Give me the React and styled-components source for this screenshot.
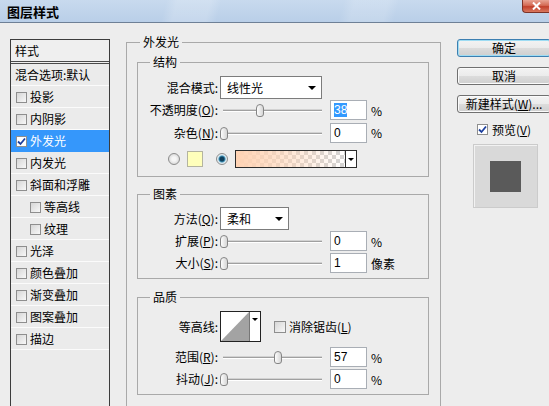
import styled, { createGlobalStyle } from "styled-components"

const GlobalStyle = createGlobalStyle`
  html, body {
    margin: 0;
    padding: 0;
  }
  body {
    width: 549px;
    height: 406px;
    overflow: hidden;
    background: #ededed;
    font-family: "Noto Sans CJK SC", "Liberation Sans", sans-serif;
    font-size: 12px;
    color: #000;
  }
`

const styleRows = [
  { text: "混合选项:默认", plain: true },
  { text: "投影" },
  { text: "内阴影" },
  { text: "外发光", checked: true, selected: true },
  { text: "内发光" },
  { text: "斜面和浮雕" },
  { text: "等高线", indent: true },
  { text: "纹理", indent: true },
  { text: "光泽" },
  { text: "颜色叠加" },
  { text: "渐变叠加" },
  { text: "图案叠加" },
  { text: "描边" },
]

const CheckMark = ({ color = "#1c3f9e" }) => (
  <svg width="9" height="9" viewBox="0 0 9 9">
    <path d="M1 4.5 L3.5 7 L8 1.5" fill="none" stroke={color} strokeWidth="1.8" />
  </svg>
)

const Slider = ({ value }) => (
  <Track>
    <Thumb $value={value} />
  </Track>
)

const App = () => {
  return (
    <Window>
      <GlobalStyle />
      <TitleBar>
        <Title>图层样式</Title>
        <CloseButton>
          <svg width="9" height="8" viewBox="0 0 9 8">
            <path d="M1 0.5 L8 7.5 M8 0.5 L1 7.5" stroke="#fff" strokeWidth="2" />
          </svg>
        </CloseButton>
      </TitleBar>

      <Body>
        <StylePanel>
          <PanelHeader>样式</PanelHeader>
          {styleRows.map((r) => (
            <StyleRow key={r.text} $selected={r.selected} $indent={r.indent} $plain={r.plain}>
              {!r.plain && (
                <Check $white={r.selected}>{r.checked && <CheckMark />}</Check>
              )}
              <span>{r.text}</span>
            </StyleRow>
          ))}
        </StylePanel>

        <Main>
          <Group $px={10} $pr={11} $pb={12}>
            <Legend $ml={3}>外发光</Legend>

            <Group $mt={4} $pt={6} $pb={6}>
              <Legend $ml={12}>结构</Legend>
              <FieldRow $h={23}>
                <FieldLabel>混合模式:</FieldLabel>
                <Select $w={102}>
                  <span>线性光</span>
                  <Caret />
                </Select>
              </FieldRow>
              <FieldRow>
                <FieldLabel>不透明度(<u>O</u>):</FieldLabel>
                <Slider value={38} />
                <NumBox><Selected>38</Selected></NumBox>
                <Unit>%</Unit>
              </FieldRow>
              <FieldRow $h={23}>
                <FieldLabel>杂色(<u>N</u>):</FieldLabel>
                <Slider value={0} />
                <NumBox>0</NumBox>
                <Unit>%</Unit>
              </FieldRow>
              <FieldRow $mt={4} $pl={30}>
                <Radio />
                <Swatch />
                <Radio $on />
                <GradientBox>
                  <GradientFill />
                  <DropPart><Caret $small /></DropPart>
                </GradientBox>
              </FieldRow>
            </Group>

            <Group $mt={9} $pt={5} $pb={4}>
              <Legend $ml={12}>图素</Legend>
              <FieldRow $h={23}>
                <FieldLabel>方法(<u>Q</u>):</FieldLabel>
                <Select $w={69}>
                  <span>柔和</span>
                  <Caret />
                </Select>
              </FieldRow>
              <FieldRow>
                <FieldLabel>扩展(<u>P</u>):</FieldLabel>
                <Slider value={0} />
                <NumBox>0</NumBox>
                <Unit>%</Unit>
              </FieldRow>
              <FieldRow>
                <FieldLabel>大小(<u>S</u>):</FieldLabel>
                <Slider value={0} />
                <NumBox>1</NumBox>
                <Unit>像素</Unit>
              </FieldRow>
            </Group>

            <Group $mt={10} $pt={6} $pb={4}>
              <Legend $ml={12}>品质</Legend>
              <FieldRow $h={31}>
                <FieldLabel>等高线:</FieldLabel>
                <ContourBox>
                  <ContourCurve>
                    <svg width="28" height="29" viewBox="0 0 28 29">
                      <polygon points="0,29 28,0 28,29" fill="#a3a3a3" />
                    </svg>
                  </ContourCurve>
                  <ContourDrop><Caret $small /></ContourDrop>
                </ContourBox>
                <CheckLabel>
                  <Check $size={12} />
                  <span>消除锯齿(<u>L</u>)</span>
                </CheckLabel>
              </FieldRow>
              <FieldRow $mt={4}>
                <FieldLabel>范围(<u>R</u>):</FieldLabel>
                <Slider value={57} />
                <NumBox>57</NumBox>
                <Unit>%</Unit>
              </FieldRow>
              <FieldRow>
                <FieldLabel>抖动(<u>J</u>):</FieldLabel>
                <Slider value={0} />
                <NumBox>0</NumBox>
                <Unit>%</Unit>
              </FieldRow>
            </Group>
          </Group>
        </Main>

        <Side>
          <Button $primary>确定</Button>
          <Button>取消</Button>
          <Button>新建样式(<u>W</u>)...</Button>
          <PreviewToggle>
            <Check $white><CheckMark /></Check>
            <span>预览(<u>V</u>)</span>
          </PreviewToggle>
          <PreviewBox>
            <PreviewSquare />
          </PreviewBox>
        </Side>
      </Body>
    </Window>
  )
}

const Window = styled.div`
  width: 549px;
  height: 406px;
  display: flex;
  flex-direction: column;
  overflow: hidden;
`

const TitleBar = styled.div`
  height: 22px;
  flex-shrink: 0;
  display: flex;
  justify-content: space-between;
  align-items: flex-start;
  border-bottom: 1px solid #6e8096;
  background:
    linear-gradient(105deg, transparent 0 30%, rgba(255,255,255,0.18) 32% 38%, transparent 40% 62%, rgba(255,255,255,0.15) 64% 70%, transparent 72%),
    linear-gradient(to bottom, #c8daee, #b9cfe8);
`

const Title = styled.div`
  font-size: 13px;
  font-weight: bold;
  line-height: 23px;
  padding-left: 7px;
`

const CloseButton = styled.div`
  width: 27px;
  height: 13px;
  box-sizing: border-box;
  border: 1px solid #7d3328;
  border-top: none;
  border-right: none;
  border-radius: 0 0 0 4px;
  display: flex;
  align-items: center;
  justify-content: center;
  background: linear-gradient(to bottom, #e8a493 0%, #d46b55 45%, #c2412c 55%, #d9785f 100%);
`

const Body = styled.div`
  flex: 1;
  display: flex;
  align-items: flex-start;
  padding-left: 10px;
`

const StylePanel = styled.div`
  width: 100px;
  height: 400px;
  flex-shrink: 0;
  margin-top: 16px;
  box-sizing: border-box;
  border: 1px solid #3c3c3c;
  background: #ebebeb;
`

const PanelHeader = styled.div`
  height: 21px;
  line-height: 21px;
  padding-left: 4px;
  border-bottom: 3px double #4a4a4a;
  background: #efefef;
`

const StyleRow = styled.div`
  height: 22px;
  display: flex;
  align-items: center;
  gap: 3px;
  padding-left: ${(p) => (p.$plain ? 4 : p.$indent ? 19 : 5)}px;
  background: ${(p) => (p.$selected ? "#3597fb" : "transparent")};
  color: ${(p) => (p.$selected ? "#fff" : "#000")};
  box-shadow: inset 0 -1px 0 ${(p) => (p.$selected ? "#3597fb" : "#fbfbfb")};
  line-height: 16px;
  white-space: nowrap;
`

const Check = styled.span`
  width: ${(p) => p.$size || 11}px;
  height: ${(p) => p.$size || 11}px;
  box-sizing: border-box;
  flex-shrink: 0;
  border: 1px solid #8e8e8e;
  background: ${(p) => (p.$white ? "#fff" : "linear-gradient(135deg, #d6d6d6, #f8f8f8)")};
  display: inline-flex;
  align-items: center;
  justify-content: center;
`

const Main = styled.div`
  width: 315px;
  flex-shrink: 0;
  margin-left: 16px;
  margin-top: 11px;
`

const Group = styled.fieldset`
  margin: ${(p) => p.$mt || 0}px 0 0 0;
  padding: ${(p) => p.$pt || 0}px ${(p) => p.$pr ?? p.$px ?? 0}px ${(p) => p.$pb || 0}px ${(p) => p.$px || 0}px;
  border: 1px solid #a9a9a9;
  min-width: 0;
  box-sizing: border-box;
`

const Legend = styled.legend`
  margin-left: ${(p) => p.$ml}px;
  padding: 0 3px;
  line-height: 16px;
  font-size: 12px;
`

const FieldRow = styled.div`
  display: flex;
  align-items: center;
  height: ${(p) => p.$h || 22}px;
  margin-top: ${(p) => p.$mt || 0}px;
  padding-left: ${(p) => p.$pl || 0}px;
`

const FieldLabel = styled.span`
  width: 80px;
  margin-right: 2px;
  text-align: right;
  white-space: nowrap;
  line-height: 16px;
  flex-shrink: 0;
`

const Select = styled.div`
  width: ${(p) => p.$w}px;
  height: 23px;
  box-sizing: border-box;
  border: 1px solid #7c7c7c;
  background: #fff;
  display: flex;
  align-items: center;
  justify-content: space-between;
  padding: 0 5px 0 6px;
`

const Caret = styled.span`
  width: 0;
  height: 0;
  border-left: ${(p) => (p.$small ? 3 : 4)}px solid transparent;
  border-right: ${(p) => (p.$small ? 3 : 4)}px solid transparent;
  border-top: ${(p) => (p.$small ? 3 : 4)}px solid #000;
`

const Track = styled.div`
  position: relative;
  width: 102px;
  height: 16px;
  flex-shrink: 0;
  &::before {
    content: "";
    position: absolute;
    left: 3px;
    right: 0;
    top: 8px;
    height: 1px;
    background: #a0a0a0;
    box-shadow: 0 -1px 0 #d2d2d2, 0 1px 0 #fff;
  }
`

const Thumb = styled.div`
  position: absolute;
  top: 2px;
  left: ${(p) => p.$value * 0.95}px;
  width: 8px;
  height: 13px;
  box-sizing: border-box;
  border: 1px solid #858585;
  border-radius: 4px 4px 3px 3px;
  background: linear-gradient(to right, #fdfdfd, #d6d6d6);
`

const NumBox = styled.div`
  width: 37px;
  height: 20px;
  box-sizing: border-box;
  margin-left: 8px;
  padding-left: 3px;
  border: 1px solid #a9aeb5;
  background: #fff;
  display: flex;
  align-items: center;
  font-family: "Liberation Sans", sans-serif;
  font-size: 12px;
  flex-shrink: 0;
`

const Selected = styled.span`
  background: #3399ff;
  color: #fff;
  line-height: 14px;
`

const Unit = styled.span`
  margin-left: 4px;
  font-family: "Noto Sans CJK SC", sans-serif;
`

const Radio = styled.span`
  width: 12px;
  height: 12px;
  box-sizing: border-box;
  border-radius: 50%;
  border: 1px solid #8c8c8c;
  background: ${(p) =>
    p.$on
      ? "radial-gradient(circle, #0f3f5c 0 2px, #3c8fb5 3px, #d8e8f0 4px, #f4f4f4 6px)"
      : "radial-gradient(circle, #f6f6f6 0 2px, #dcdcdc 5px)"};
  flex-shrink: 0;
  margin-right: 7px;
`

const Swatch = styled.span`
  width: 16px;
  height: 16px;
  box-sizing: border-box;
  border: 1px solid #b4b4a0;
  background: #ffffbb;
  margin-right: 13px;
  flex-shrink: 0;
`

const GradientBox = styled.div`
  width: 122px;
  height: 18px;
  box-sizing: border-box;
  border: 1px solid #2c2c2c;
  display: flex;
  flex-shrink: 0;
`

const GradientFill = styled.div`
  flex: 1;
  background:
    linear-gradient(to right, #ffd3b4 0%, rgba(255, 211, 180, 0.6) 45%, rgba(255, 211, 180, 0) 100%),
    conic-gradient(#d3d3d3 25%, #fff 0 50%, #d3d3d3 0 75%, #fff 0) 0 0 / 8px 8px;
`

const DropPart = styled.div`
  width: 10px;
  border-left: 1px solid #2c2c2c;
  background: #fff;
  display: flex;
  align-items: center;
  justify-content: center;
`

const ContourBox = styled.div`
  width: 41px;
  height: 31px;
  box-sizing: border-box;
  border: 1px solid #222;
  display: flex;
  flex-shrink: 0;
  background: #fff;
`

const ContourCurve = styled.div`
  flex: 1;
  display: flex;
  svg {
    display: block;
  }
`

const ContourDrop = styled.div`
  width: 11px;
  border-left: 1px solid #777;
  display: flex;
  justify-content: center;
  padding-top: 6px;
  box-sizing: border-box;
`

const CheckLabel = styled.div`
  display: flex;
  align-items: center;
  gap: 3px;
  margin-left: 13px;
  line-height: 16px;
`

const Side = styled.div`
  width: 94px;
  flex-shrink: 0;
  margin-left: 16px;
  margin-top: 16px;
  display: flex;
  flex-direction: column;
`

const Button = styled.div`
  height: 18px;
  box-sizing: border-box;
  margin-bottom: 10px;
  border: 1px solid ${(p) => (p.$primary ? "#3c7fb1" : "#707070")};
  border-radius: 3px;
  box-shadow: inset 0 0 0 1px ${(p) => (p.$primary ? "#9edcf3" : "#fbfbfb")};
  background: linear-gradient(to bottom, #f3f3f3 0%, #ebebeb 50%, #dcdcdc 50%, #cfcfcf 100%);
  display: flex;
  align-items: center;
  justify-content: center;
  line-height: 16px;
  white-space: nowrap;
`

const PreviewToggle = styled.div`
  height: 13px;
  display: flex;
  align-items: center;
  gap: 4px;
  padding-left: 20px;
  line-height: 13px;
`

const PreviewBox = styled.div`
  width: 65px;
  height: 64px;
  box-sizing: border-box;
  margin: 8px 0 0 16px;
  border: 1px solid #cbcbcb;
  box-shadow: inset 1px 1px 0 #f2f2f2;
  background: #d9d9d9;
  display: flex;
  align-items: center;
  justify-content: center;
`

const PreviewSquare = styled.div`
  width: 31px;
  height: 31px;
  background: #5a5a5a;
`

export default App
